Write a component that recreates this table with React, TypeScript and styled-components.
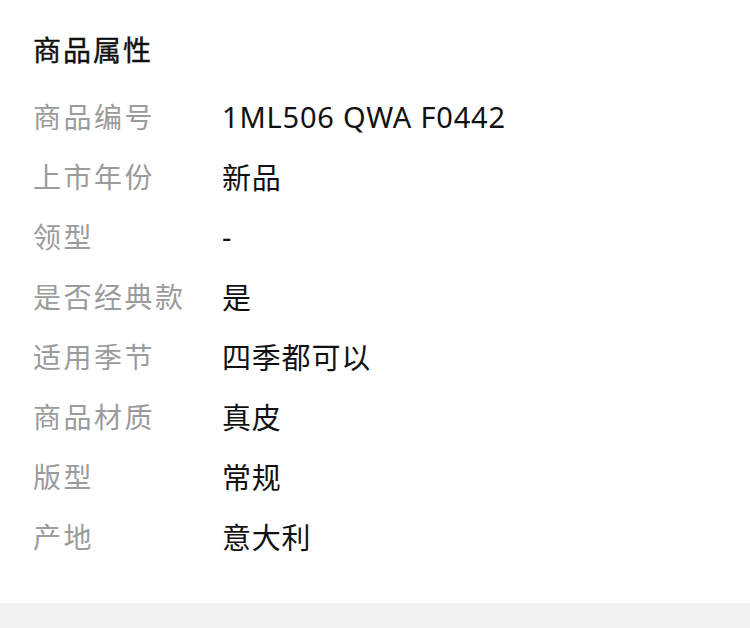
import React, {FC} from 'react'
import styled, {createGlobalStyle} from 'styled-components'

const GlobalStyle = createGlobalStyle`
  body {
    margin: 0;
    background: #fff;
    font-family: "Noto Sans", "Noto Sans CJK SC", sans-serif;
  }
`

const Section = styled.section`
  padding: 20px 33px 37px 33px;
  background: #fff;
`

const Title = styled.h2`
  margin: 0 0 6px 0;
  font-size: 28px;
  line-height: 60px;
  font-weight: 400;
  letter-spacing: 2px;
  color: #111;
  -webkit-text-stroke: 0.4px #111;
`

const List = styled.dl`
  margin: 0;
`

const Row = styled.div`
  display: grid;
  grid-template-columns: 189px 1fr;
  align-items: center;
  height: 60px;
`

const Label = styled.dt`
  font-size: 28px;
  letter-spacing: 2.5px;
  color: #9b9b9b;
`

const Value = styled.dd`
  margin: 0;
  font-size: 29px;
  letter-spacing: 0.8px;
  color: #111;
`

const Divider = styled.div`
  height: 25px;
  background: #f2f2f2;
`

const attrs: [string, string][] = [
  ['商品编号', '1ML506 QWA F0442'],
  ['上市年份', '新品'],
  ['领型', '-'],
  ['是否经典款', '是'],
  ['适用季节', '四季都可以'],
  ['商品材质', '真皮'],
  ['版型', '常规'],
  ['产地', '意大利'],
]

const App: FC = () => {
  return (
    <>
      <GlobalStyle/>
      <Section>
        <Title>商品属性</Title>
        <List>
          {attrs.map(([k, v]) => (
            <Row key={k}>
              <Label>{k}</Label>
              <Value>{v}</Value>
            </Row>
          ))}
        </List>
      </Section>
      <Divider/>
    </>
  )
}

export default App
